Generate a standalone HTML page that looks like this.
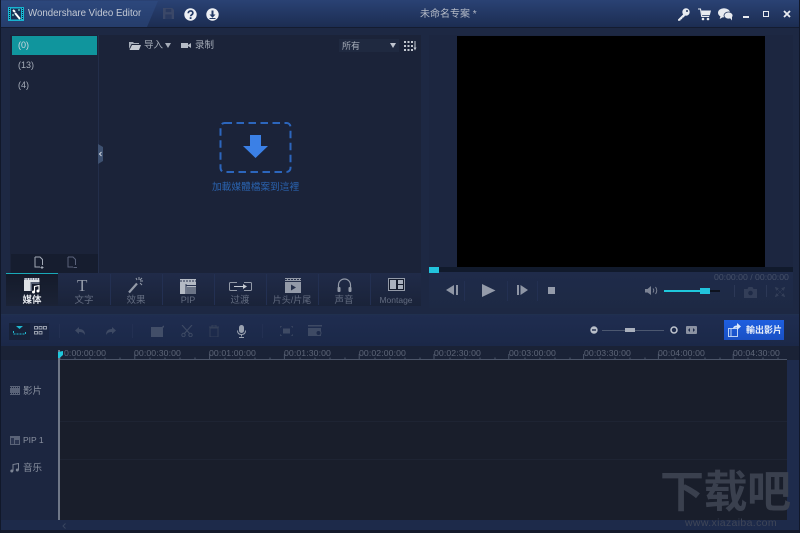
<!DOCTYPE html>
<html><head><meta charset="utf-8">
<style>
html,body{margin:0;padding:0;background:#1c2740;}
#r{position:relative;width:800px;height:533px;overflow:hidden;background:#1d2843;font-family:"Liberation Sans","Noto Sans CJK SC",sans-serif;color:#8d95a5;}
#r div,#r svg{position:absolute;}
.t{white-space:nowrap;line-height:1;}
.tab{top:274px;width:52px;height:32px;text-align:center;}
.tl{width:100%;top:22px;font-size:9.5px;text-align:center;color:#636c80;white-space:nowrap;line-height:1;}
.rul{top:349px;font-size:8.7px;color:#5e6678;white-space:nowrap;line-height:1;letter-spacing:.1px;}
.sep{width:1px;background:#233052;}
</style></head><body>
<div id="r">
<!-- title bar -->
<div style="left:0;top:0;width:800px;height:27px;background:linear-gradient(#2a4274,#1c2d52);"></div>
<div style="left:0;top:27px;width:800px;height:1px;background:#141c30;"></div>
<svg style="left:0;top:0" width="170" height="27"><polygon points="0,1 158,1 147,27 0,27" fill="#2f4d85" opacity=".5"/></svg>
<svg style="left:8px;top:7px" width="16" height="14" viewBox="0 0 16 14"><rect width="16" height="14" fill="#18b4d0"/><rect x="3" y="1.500" width="10" height="11" fill="#173056"/><path d="M5 3l2 2 M7 6l5 6" stroke="#fff" stroke-width="2"/><path d="M10 3h2M4 8h2" stroke="#9fe" stroke-width="1"/><path d="M1.500 1v12 M14.500 1v12" stroke="#123" stroke-width="1" stroke-dasharray="1 1"/></svg>
<div class="t" style="left:28px;top:9px;font-size:9.700px;color:#c3c9d4;">Wondershare Video Editor</div>
<svg style="left:163px;top:8px" width="11" height="11" viewBox="0 0 12 12"><path d="M0 0h10l2 2v10H0z" fill="#3b4868"/><rect x="3" y="1" width="6" height="3.500" fill="#2a3a60"/><rect x="2.500" y="7" width="7" height="5" fill="#2a3a60"/></svg>
<svg style="left:184px;top:8px" width="13" height="13" viewBox="0 0 13 13"><circle cx="6.500" cy="6.500" r="6.200" fill="#eef0f4"/><path d="M4.300 5.200c0-3 4.600-3 4.600-.2 0 1.700-2.300 1.800-2.300 3.200" stroke="#233a66" stroke-width="1.700" fill="none"/><rect x="5.700" y="9.200" width="1.800" height="1.800" fill="#233a66"/></svg>
<svg style="left:206px;top:8px" width="13" height="13" viewBox="0 0 13 13"><circle cx="6.500" cy="6.500" r="6.200" fill="#eef0f4"/><path d="M5.500 2.500h2v4h2l-3 3.200-3-3.200h2z" fill="#233a66"/><rect x="3.500" y="10" width="6" height="1" fill="#233a66"/></svg>
<div class="t" style="left:420px;top:10px;font-size:10px;color:#b4bac6;">未命名专案 *</div>
<svg style="left:677px;top:8px" width="13" height="13" viewBox="0 0 13 13"><circle cx="9" cy="4" r="3.700" fill="#e8ebf0"/><circle cx="10" cy="3" r="1" fill="#22365e"/><path d="M7 5.500L1 11.500v1.300h2.200l.6-1.400 1.300-.3.300-1.400 1.500-.4 1.500-2.300z" fill="#e8ebf0"/></svg>
<svg style="left:698px;top:8px" width="13" height="13" viewBox="0 0 13 13"><path d="M0 1h2.500l1.200 7.500h7.500" stroke="#e8ebf0" stroke-width="1.100" fill="none"/><path d="M3.200 2.500H13l-1.200 4.800H4z" fill="#e8ebf0"/><circle cx="5" cy="11" r="1.300" fill="#e8ebf0"/><circle cx="10" cy="11" r="1.300" fill="#e8ebf0"/></svg>
<svg style="left:718px;top:8px" width="15" height="13" viewBox="0 0 15 13"><ellipse cx="6" cy="4.800" rx="6" ry="4.600" fill="#e8ebf0"/><path d="M2.500 8l-.8 3 3.500-2z" fill="#e8ebf0"/><ellipse cx="10.500" cy="7.500" rx="4.500" ry="3.500" fill="#e8ebf0" stroke="#22365e" stroke-width=".8"/><path d="M12 10l2 2.500v-3.500z" fill="#e8ebf0"/></svg>
<div style="left:743px;top:16px;width:6px;height:2px;background:#e8ebf0;"></div>
<div style="left:763px;top:11px;width:4px;height:4px;border:1.500px solid #e8ebf0;"></div>
<svg style="left:783px;top:10px" width="8" height="8" viewBox="0 0 8 8"><path d="M1 1l6 6M7 1L1 7" stroke="#e8ebf0" stroke-width="1.800"/></svg>

<!-- media panel -->
<div style="left:10px;top:35px;width:411px;height:238px;background:#1b2339;"></div>
<div style="left:98px;top:35px;width:1px;height:238px;background:#232e4a;"></div>
<div style="left:12px;top:36px;width:85px;height:19px;background:#10959d;"></div>
<div class="t" style="left:18px;top:41px;font-size:9px;color:#d0d8e0;">(0)</div>
<div class="t" style="left:18px;top:61px;font-size:9px;color:#a7aeba;">(13)</div>
<div class="t" style="left:18px;top:81px;font-size:9px;color:#a7aeba;">(4)</div>
<div style="left:11px;top:254px;width:87px;height:19px;background:#161d2f;"></div>
<svg style="left:33px;top:256px" width="12" height="13" viewBox="0 0 12 13"><path d="M2 1h5l2.500 2.500V9 M2 1v10h5" stroke="#a2a9b6" fill="none"/><path d="M9 10v3M7.500 11.500h3" stroke="#a2a9b6"/></svg>
<svg style="left:66px;top:256px" width="12" height="13" viewBox="0 0 12 13"><path d="M2 1h5l2.500 2.500V9 M2 1v10h5" stroke="#59617a" fill="none"/><path d="M7.500 11.500h3.500" stroke="#59617a"/></svg>
<svg style="left:129px;top:41px" width="12" height="9" viewBox="0 0 12 9"><path d="M0 1h4l1 1h5v1H2.500L0 8z" fill="#a6adb9"/><path d="M3 4h9l-2 5H0.500z" fill="#c4c9d2"/></svg>
<div class="t" style="left:144px;top:41px;font-size:9.500px;color:#a6adb9;line-height:10px;">导入</div>
<svg style="left:165px;top:43px" width="6" height="5"><path d="M0 0h6L3 5z" fill="#a6adb9"/></svg>
<svg style="left:181px;top:42px" width="10" height="7"><path d="M0 1h7v5H0zM7 3l3-2v5L7 4z" fill="#b5bbc6"/></svg>
<div class="t" style="left:195px;top:41px;font-size:9.500px;color:#a6adb9;line-height:10px;">录制</div>
<div style="left:339px;top:39px;width:60px;height:13px;background:#1f2940;"></div>
<div class="t" style="left:342px;top:41px;font-size:9px;color:#a6adb9;line-height:10px;">所有</div>
<svg style="left:390px;top:43px" width="6" height="5"><path d="M0 0h6L3 5z" fill="#c0c5cf"/></svg>
<svg style="left:404px;top:41px" width="13" height="11" viewBox="0 0 13 11"><g fill="#c3c8d1"><rect x="0" y="0" width="2" height="2"/><rect x="3.500" y="0" width="2" height="2"/><rect x="7" y="0" width="2" height="2"/><rect x="0" y="4" width="2" height="2"/><rect x="3.500" y="4" width="2" height="2"/><rect x="7" y="4" width="2" height="2"/><rect x="0" y="8" width="2" height="2"/><rect x="3.500" y="8" width="2" height="2"/><rect x="7" y="8" width="2" height="2"/></g><path d="M11 0v7" stroke="#c3c8d1"/><path d="M9.500 6.500h3L11 9.500z" fill="#c3c8d1"/></svg>
<svg style="left:98px;top:144px" width="6" height="20"><path d="M0 0l5 3v14l-5 3z" fill="#3d5070"/><path d="M3.500 8l-2 2 2 2" stroke="#cfd5df" fill="none"/></svg>
<!-- import -->
<svg style="left:218px;top:120px" width="75" height="54" viewBox="0 0 75 54"><rect x="2.500" y="3" width="70" height="49" rx="4" fill="none" stroke="#2c66bd" stroke-width="2" stroke-dasharray="7.500 4.500"/><path d="M32 15h11v11h7L37.500 38 25 26h7z" fill="#3b80e6"/></svg>
<div class="t" style="left:212px;top:183px;font-size:9.700px;color:#2a62ad;">加載媒體檔案到這裡</div>

<!-- tabs -->
<div style="left:6px;top:273px;width:415px;height:33px;background:linear-gradient(#202b49,#1a2339);"></div>
<div style="left:6px;top:273px;width:52px;height:33px;background:linear-gradient(#141a2a,#1b2336);"></div>
<div style="left:6px;top:273px;width:52px;height:1px;background:#19a9b8;"></div>
<div class="sep" style="left:110px;top:274px;height:31px;"></div><div class="sep" style="left:162px;top:274px;height:31px;"></div><div class="sep" style="left:214px;top:274px;height:31px;"></div><div class="sep" style="left:266px;top:274px;height:31px;"></div><div class="sep" style="left:318px;top:274px;height:31px;"></div><div class="sep" style="left:370px;top:274px;height:31px;"></div>
<div class="tab" style="left:6px;"><div class="tl" style="color:#e6e9ee;font-weight:bold;font-size:9.500px;">媒体</div></div>
<svg style="left:24px;top:278px" width="17" height="16" viewBox="0 0 17 16"><rect width="15.500" height="13" fill="#dfe2e7"/><path d="M0 1h15.500" stroke="#2a3450" stroke-dasharray="1.500 1"/><rect x="6.500" y="4" width="9" height="9" fill="#555e72"/><rect x="8" y="6" width="9" height="10" fill="#141a2a"/><path d="M10.500 14V8.500l4.500-1V13" stroke="#fff" stroke-width="1.100" fill="none"/><circle cx="9.500" cy="14" r="1.500" fill="#fff"/><circle cx="14" cy="13" r="1.500" fill="#fff"/></svg>
<div class="tab" style="left:58px;"><div class="tl">文字</div></div>
<div class="t" style="left:77px;top:277px;font-size:17px;font-family:'Liberation Serif',serif;color:#939aa8;">T</div>
<div class="tab" style="left:110px;"><div class="tl">效果</div></div>
<svg style="left:128px;top:277px" width="16" height="17" viewBox="0 0 16 17"><path d="M1 15.500L9 6.500" stroke="#939aa8" stroke-width="2.200"/><path d="M11 0v3M15 4h-3M14 8l-2-2M8 1l1 2M14 1l-2 2" stroke="#939aa8"/></svg>
<div class="tab" style="left:162px;"><div class="tl" style="font-size:9px;">PIP</div></div>
<svg style="left:180px;top:279px" width="17" height="15" viewBox="0 0 17 15"><rect width="16" height="15" fill="#b4bac4"/><path d="M0 2h16" stroke="#2a3450" stroke-dasharray="2 1"/><rect x="6" y="6" width="10" height="1" fill="#2a3450"/><rect x="5.500" y="5" width="1" height="10" fill="#2a3450"/><rect x="7" y="8" width="9" height="7" fill="#6b7486"/></svg>
<div class="tab" style="left:214px;"><div class="tl">过渡</div></div>
<svg style="left:229px;top:281px" width="23" height="11" viewBox="0 0 23 11"><rect x=".5" y="1.500" width="22" height="8" rx="1" fill="none" stroke="#939aa8"/><rect x="8" y="0" width="7" height="11" fill="#1f2a46"/><path d="M5 5.500h10" stroke="#c8ccd4"/><path d="M14 3l4 2.500-4 2.500z" fill="#c8ccd4"/></svg>
<div class="tab" style="left:266px;"><div class="tl" style="font-size:9px;">片头/片尾</div></div>
<svg style="left:285px;top:278px" width="16" height="15" viewBox="0 0 16 15"><rect width="16" height="15" fill="#939aa8"/><path d="M0 1.500h16" stroke="#26304a" stroke-dasharray="2 1"/><rect x="0" y="3" width="16" height="1" fill="#26304a"/><path d="M6 6.500l5 3-5 3z" fill="#26304a"/></svg>
<div class="tab" style="left:318px;"><div class="tl">声音</div></div>
<svg style="left:337px;top:278px" width="15" height="15" viewBox="0 0 15 15"><path d="M1.500 10V7a6 6 0 0 1 12 0v3" stroke="#939aa8" stroke-width="1.200" fill="none"/><rect x="0.500" y="9" width="3" height="5" rx="1" fill="#939aa8"/><rect x="11.500" y="9" width="3" height="5" rx="1" fill="#939aa8"/></svg>
<div class="tab" style="left:370px;"><div class="tl" style="font-size:8.500px;">Montage</div></div>
<svg style="left:388px;top:278px" width="17" height="13" viewBox="0 0 17 13"><rect x=".5" y=".5" width="16" height="12" fill="#141b2c" stroke="#939aa8"/><rect x="2" y="2" width="6" height="9" fill="#a9b0bd"/><rect x="10" y="2" width="5" height="4" fill="#a9b0bd"/><rect x="10" y="7" width="5" height="4" fill="#a9b0bd"/></svg>
<div style="left:0;top:314px;width:800px;height:1px;background:#20304f;"></div>

<!-- preview -->
<div style="left:429px;top:35px;width:364px;height:273px;background:#1c2640;"></div>
<div style="left:457px;top:36px;width:308px;height:231px;background:#000;"></div>
<div style="left:429px;top:267px;width:364px;height:5px;background:#111a2c;"></div>
<div style="left:429px;top:272px;width:364px;height:36px;background:linear-gradient(#1f2b4a,#1d2944);"></div>
<div style="left:429px;top:267px;width:10px;height:6px;background:#22c3dc;"></div>
<div class="t" style="left:714px;top:273px;font-size:8.700px;color:#465169;">00:00:00 / 00:00:00</div>
<svg style="left:446px;top:285px" width="13" height="11"><path d="M8 0v10L0 5z" fill="#8f96a5"/><rect x="10" y="0" width="2" height="10" fill="#8f96a5"/></svg>
<svg style="left:482px;top:284px" width="14" height="13"><path d="M0 0l13.500 6.500L0 13z" fill="#949baa"/></svg>
<svg style="left:517px;top:285px" width="12" height="11"><rect x="0" y="0" width="2" height="10" fill="#8f96a5"/><path d="M3.500 0v10L11 5z" fill="#8f96a5"/></svg>
<div style="left:548px;top:287px;width:7px;height:7px;background:#949baa;"></div>
<div class="sep" style="left:464px;top:281px;height:20px;"></div><div class="sep" style="left:507px;top:281px;height:20px;"></div><div class="sep" style="left:537px;top:281px;height:20px;"></div>
<svg style="left:645px;top:286px" width="14" height="10"><path d="M0 3h2.500L6 0v9L2.500 6.500H0z" fill="#7c8394"/><path d="M8 2.500q1.500 2 0 4M10.500 1q2.500 3.500 0 7" stroke="#7c8394" fill="none"/></svg>
<div style="left:664px;top:290px;width:56px;height:2px;background:#0d121e;"></div>
<div style="left:664px;top:290px;width:41px;height:2px;background:#1fc8dc;"></div>
<div style="left:700px;top:288px;width:10px;height:6px;background:#22c3dc;"></div>
<svg style="left:744px;top:287px" width="13" height="11"><path d="M0 2h3.500l1-2h4l1 2H13v9H0z" fill="#333e58"/><circle cx="6.500" cy="6" r="2.300" fill="#1e2a46"/></svg>
<svg style="left:775px;top:287px" width="10" height="10"><path d="M0 0l3.500 1.500L1.500 3.500zM10 0L8.500 3.500 6.500 1.500zM0 10l1.500-3.500 2 2zM10 10L6.500 8.500l2-2z M2 2l6 6M8 2l-6 6" fill="#333e58" stroke="#333e58" stroke-width=".5"/></svg>
<div class="sep" style="left:734px;top:285px;height:12px;background:#2c3856;"></div><div class="sep" style="left:766px;top:285px;height:12px;background:#2c3856;"></div>

<!-- toolbar -->
<div style="left:0;top:315px;width:800px;height:31px;background:linear-gradient(#1f2d50,#1b2848);"></div>
<div style="left:9px;top:323px;width:40px;height:17px;background:#1a2542;"></div>
<div style="left:9px;top:323px;width:21px;height:17px;background:#172138;"></div>
<svg style="left:13px;top:326px" width="13" height="9"><path d="M3 0h7L6.500 3z" fill="#1fb8d0"/><path d="M.5 5v3h12V5" stroke="#1fb8d0" fill="none" stroke-dasharray="2 1"/></svg>
<svg style="left:34px;top:326px" width="13" height="9"><g fill="none" stroke="#a4abb8" stroke-width=".9"><rect x=".5" y=".5" width="3" height="2.500"/><rect x="5" y=".5" width="3" height="2.500"/><rect x="9.500" y=".5" width="3" height="2.500"/><rect x=".5" y="5.500" width="3" height="2.500"/><rect x="5" y="5.500" width="3" height="2.500"/></g></svg>
<div class="sep" style="left:59px;top:324px;height:14px;"></div>
<svg style="left:75px;top:327px" width="11" height="8"><path d="M4 0L0 3.500 4 7V5q4-.5 6 3 0-6-6-6z" fill="#3e4a64"/></svg>
<svg style="left:105px;top:327px" width="11" height="8"><path d="M7 0l4 3.500L7 7V5Q3 4.500 1 8q0-6 6-6z" fill="#3e4a64"/></svg>
<div class="sep" style="left:132px;top:324px;height:14px;"></div>
<svg style="left:151px;top:325px" width="13" height="12"><rect y="2" width="12" height="10" fill="#424e68"/><path d="M6 8l7-7" stroke="#424e68" stroke-width="1.500"/></svg>
<svg style="left:181px;top:325px" width="12" height="12"><path d="M1 0l8 9M11 0L3 9" stroke="#3e4a64" stroke-width="1.100"/><circle cx="2.500" cy="10" r="1.700" fill="none" stroke="#3e4a64"/><circle cx="9.500" cy="10" r="1.700" fill="none" stroke="#3e4a64"/></svg>
<svg style="left:209px;top:325px" width="10" height="12"><path d="M0 2h10M3 2V0h4v2M1 3h8v9H1z" stroke="#333f58" fill="none"/></svg>
<svg style="left:237px;top:325px" width="9" height="13"><rect x="2" y="0" width="5" height="8" rx="2.500" fill="#9aa2b0"/><path d="M.5 5.500q0 4 4 4t4-4M4.500 9.500v2M2 12.500h5" stroke="#9aa2b0" fill="none"/></svg>
<div class="sep" style="left:262px;top:324px;height:14px;"></div>
<svg style="left:280px;top:326px" width="13" height="10"><path d="M0 2V0h2M11 0h2v2M13 8v2h-2M2 10H0V8" stroke="#3e4a64" fill="none"/><rect x="3" y="2.500" width="7" height="5" fill="#3e4a64"/></svg>
<svg style="left:308px;top:325px" width="14" height="11"><rect y="0" width="14" height="1.500" fill="#3e4a64"/><rect y="3" width="13" height="8" fill="#3e4a64"/><circle cx="10.500" cy="8" r="2.500" fill="#1d2a4a" stroke="#3e4a64"/></svg>
<!-- zoom -->
<svg style="left:590px;top:326px" width="8" height="8"><circle cx="4" cy="4" r="3.700" fill="#b8bec8"/><rect x="2" y="3.300" width="4" height="1.400" fill="#1d2a4a"/></svg>
<div style="left:602px;top:329.500px;width:62px;height:1px;background:#4c5870;"></div>
<div style="left:625px;top:328px;width:10px;height:4px;background:#a9b0bd;"></div>
<svg style="left:670px;top:326px" width="8" height="8"><circle cx="4" cy="4" r="3" fill="none" stroke="#c0c5ce" stroke-width="1.500"/></svg>
<svg style="left:686px;top:326px" width="11" height="8"><rect width="11" height="8" rx="1" fill="#8b92a2"/><path d="M2 4l2-2v4zM9 4L7 2v4z" fill="#1d2a4a"/></svg>
<div style="left:724px;top:320px;width:60px;height:20px;background:linear-gradient(#1e5fe0,#1a50c4);"></div>
<svg style="left:728px;top:323px" width="14" height="14" viewBox="0 0 14 14"><path d="M.5 5.500h9v8h-9zM3 5.500v8" stroke="#bcd2f4" fill="none"/><path d="M5 6q0-3.500 4-3.500V0l4 3.500L9 7V4.500q-2.500 0-4 1.500z" fill="#dce8fa"/></svg>
<div class="t" style="left:746px;top:326px;font-size:9px;color:#e6edf8;font-weight:bold;">輸出影片</div>

<!-- timeline -->
<div style="left:0;top:346px;width:800px;height:14px;background:#1a2236;"></div>
<div style="left:0;top:360px;width:58px;height:160px;background:#1c2640;"></div>
<div style="left:787px;top:360px;width:13px;height:160px;background:#1e2b4c;"></div>
<div style="left:58px;top:350px;width:2px;height:170px;background:#6f7787;"></div>
<div style="left:60px;top:360px;width:727px;height:160px;background:#191e2b;"></div>
<div style="left:60px;top:421px;width:727px;height:1px;background:#1e2433;"></div>
<div style="left:60px;top:459px;width:727px;height:1px;background:#1e2433;"></div>
<div style="left:60px;top:359px;width:727px;height:1px;background:#4c5569;"></div>
<svg style="left:60px;top:353px" width="727" height="6"><path d="M0 6V1M74.800 6V1M149.600 6V1M224.400 6V1M299.200 6V1M374 6V1M448.800 6V1M523.600 6V1M598.400 6V1M673.200 6V1" stroke="#4c5569"/><path d="M15 6V4.500M30 6V4.500M45 6V4.500M60 6V4.500M90 6V4.500M105 6V4.500M120 6V4.500M135 6V4.500M165 6V4.500M180 6V4.500M195 6V4.500M210 6V4.500M240 6V4.500M255 6V4.500M270 6V4.500M285 6V4.500M315 6V4.500M330 6V4.500M345 6V4.500M360 6V4.500M390 6V4.500M405 6V4.500M420 6V4.500M435 6V4.500M465 6V4.500M480 6V4.500M495 6V4.500M510 6V4.500M540 6V4.500M555 6V4.500M570 6V4.500M585 6V4.500M615 6V4.500M630 6V4.500M645 6V4.500M660 6V4.500M688 6V4.500M703 6V4.500M718 6V4.500" stroke="#4c5569"/></svg>
<svg style="left:58px;top:351px" width="6" height="8"><path d="M0 1l5-1v4L1.500 7H0z" fill="#1fc8dc"/></svg>
<div class="rul" style="left:64px;">0:00:00:00</div>
<div class="rul" style="left:134px;">00:00:30:00</div>
<div class="rul" style="left:209px;">00:01:00:00</div>
<div class="rul" style="left:284px;">00:01:30:00</div>
<div class="rul" style="left:359px;">00:02:00:00</div>
<div class="rul" style="left:434px;">00:02:30:00</div>
<div class="rul" style="left:509px;">00:03:00:00</div>
<div class="rul" style="left:584px;">00:03:30:00</div>
<div class="rul" style="left:658px;">00:04:00:00</div>
<div class="rul" style="left:733px;">00:04:30:00</div>
<svg style="left:10px;top:386px" width="10" height="9"><rect width="10" height="9" fill="#5a6378"/><path d="M0 1.500h10M0 7.500h10" stroke="#1c2640" stroke-dasharray="1 1"/></svg>
<div class="t" style="left:23px;top:387px;font-size:9.500px;color:#8a91a0;line-height:10px;">影片</div>
<svg style="left:10px;top:436px" width="10" height="9"><rect width="10" height="9" fill="#5a6378"/><rect x="1" y="2" width="3" height="6" fill="#2a3450"/><rect x="5" y="4" width="4" height="4" fill="#2a3450"/></svg>
<div class="t" style="left:23px;top:436px;font-size:8.500px;color:#8a91a0;">PIP 1</div>
<svg style="left:10px;top:463px" width="9" height="10"><path d="M3 8V1.500L8.500.5V7" stroke="#7c8494" fill="none"/><circle cx="1.800" cy="8" r="1.500" fill="#7c8494"/><circle cx="7.300" cy="7" r="1.500" fill="#7c8494"/></svg>
<div class="t" style="left:23px;top:464px;font-size:9.500px;color:#8a91a0;line-height:10px;">音乐</div>
<div style="left:0;top:520px;width:800px;height:10px;background:#1d2a4a;"></div>
<svg style="left:62px;top:523px" width="4" height="6"><path d="M3.500 .5L1 3l2.500 2.500" stroke="#39455f" fill="none"/></svg>
<div style="left:0;top:530px;width:800px;height:3px;background:#141a2b;"></div>
<div style="left:0;top:0;width:1px;height:533px;background:#11182a;"></div>
<div style="left:799px;top:0;width:1px;height:533px;background:#11182a;"></div>
<!-- watermark -->
<div class="t" style="left:660px;top:470px;font-size:44px;font-weight:bold;color:#3a404e;line-height:46px;letter-spacing:-.5px;">下载吧</div>
<div class="t" style="left:685px;top:518px;font-size:10.500px;color:#3f4658;letter-spacing:.35px;">www.xiazaiba.com</div>
</div>
</body></html>
